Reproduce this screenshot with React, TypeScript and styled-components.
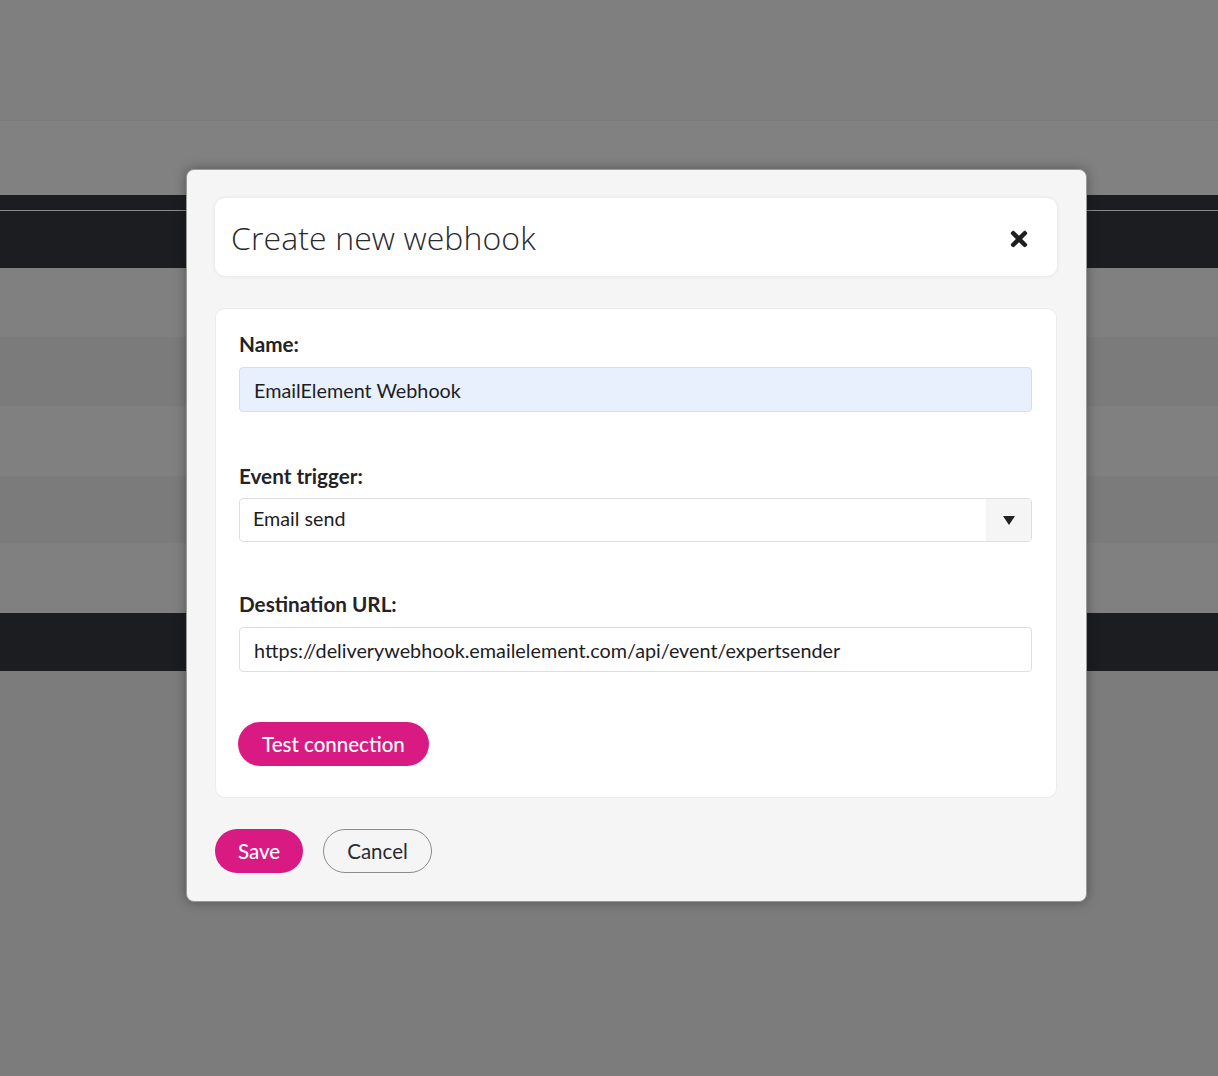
import React, { useState } from 'react'
import styled, { createGlobalStyle } from 'styled-components'
import { FaTimes } from 'react-icons/fa'

const GlobalStyle = createGlobalStyle`
  html, body {
    margin: 0;
    padding: 0;
    background: #7c7c7c;
  }
  body {
    font-family: Lato, 'Open Sans', Arial, sans-serif;
    color: #232323;
  }
  * {
    box-sizing: border-box;
  }
`

const Page = styled.div`
  position: relative;
  width: 1218px;
  height: 1076px;
  overflow: hidden;
  background: #7c7c7c;
`

const Band = styled.div<{ $h: number; $bg: string }>`
  height: ${(p) => p.$h}px;
  background: ${(p) => p.$bg};
`

const TopBand = styled.div`
  height: 121px;
  background: #7f7f7f;
  border-bottom: 1px solid #7a7a7a;
`

const DarkBar = styled.div<{ $h: number; $line?: boolean }>`
  height: ${(p) => p.$h}px;
  background: #1c1d21;
  padding-top: ${(p) => (p.$line ? '15px' : '0')};

  &::before {
    content: '';
    display: ${(p) => (p.$line ? 'block' : 'none')};
    height: 1px;
    background: #8a8a8a;
  }
`

const Modal = styled.div`
  position: absolute;
  left: 186px;
  top: 169px;
  width: 901px;
  padding: 28px 29px 28px 28px;
  background: #f5f5f5;
  border: 1px solid #9a9a9a;
  border-radius: 8px;
  box-shadow: 0 0 12px rgba(0, 0, 0, 0.35);
  display: flex;
  flex-direction: column;
`

const Header = styled.div`
  height: 78px;
  background: #fff;
  border-radius: 10px;
  box-shadow: 0 0 4px rgba(0, 0, 0, 0.08);
  display: flex;
  align-items: center;
  justify-content: space-between;
  padding: 0 26px 0 16px;
`

const Title = styled.h2`
  margin: 0;
  font-family: 'Open Sans', sans-serif;
  font-weight: 300;
  font-size: 32px;
  letter-spacing: 0.1px;
  color: #2a2a2e;
`

const CloseButton = styled.button`
  border: 0;
  background: none;
  padding: 0;
  margin-top: 3px;
  display: flex;
  color: #1f1f22;
  cursor: pointer;
`

const Card = styled.div`
  margin-top: 32px;
  background: #fff;
  border: 1px solid #ececec;
  border-radius: 10px;
  padding: 23px 24px 31px 23px;
  display: flex;
  flex-direction: column;
`

const Field = styled.div<{ $gap: number }>`
  display: flex;
  flex-direction: column;
  margin-bottom: ${(p) => p.$gap}px;
`

const Label = styled.label`
  font-weight: 700;
  font-size: 20.7px;
  line-height: 24px;
  margin-bottom: 11px;
  color: #232326;
`

const TextInput = styled.input<{ $filled?: boolean }>`
  height: 45px;
  width: 100%;
  border: 1px solid ${(p) => (p.$filled ? '#d8dde6' : '#dedede')};
  border-radius: 4px;
  background: ${(p) => (p.$filled ? '#e8f0fe' : '#fff')};
  padding: 0 14px;
  font-family: Lato, sans-serif;
  font-size: 19.8px;
  color: #1d1d1f;
  outline: none;
`

const Select = styled.div`
  height: 44px;
  display: flex;
  border: 1px solid #dedede;
  border-radius: 4px;
  overflow: hidden;
  margin-top: -1px;
`

const SelectValue = styled.div`
  flex: 1;
  display: flex;
  align-items: center;
  padding: 0 13px 3px;
  font-size: 19.7px;
  color: #1d1d1f;
`

const SelectArrow = styled.div`
  width: 45px;
  background: #f5f5f5;
  display: flex;
  align-items: center;
  justify-content: center;
`

const PinkButton = styled.button`
  height: 44px;
  padding: 0 23px;
  border: 0;
  border-radius: 22px;
  background: #d91a82;
  color: #fff;
  font-family: Lato, sans-serif;
  font-size: 20.5px;
  font-weight: 500;
  align-self: flex-start;
  cursor: pointer;
`

const TestButton = styled(PinkButton)`
  margin-left: -1px;
  padding: 0 24px;
`

const Footer = styled.div`
  margin-top: 31px;
  display: flex;
  gap: 20px;
`

const GhostButton = styled.button`
  height: 44px;
  padding: 0 23px;
  border: 1px solid #8c8c8c;
  border-radius: 22px;
  background: transparent;
  color: #2a2a2e;
  font-family: Lato, sans-serif;
  font-size: 20.5px;
  cursor: pointer;
`

export default function App() {
  const [name, setName] = useState('EmailElement Webhook')
  const [url, setUrl] = useState('https://deliverywebhook.emailelement.com/api/event/expertsender')

  return (
    <Page>
      <GlobalStyle />
      <TopBand />
      <Band $h={74} $bg="#818181" />
      <DarkBar $h={73} $line />
      <Band $h={69} $bg="#808080" />
      <Band $h={69} $bg="#7b7b7b" />
      <Band $h={70} $bg="#808080" />
      <Band $h={67} $bg="#7b7b7b" />
      <Band $h={70} $bg="#808080" />
      <DarkBar $h={58} />

      <Modal>
        <Header>
          <Title>Create new webhook</Title>
          <CloseButton aria-label="close">
            <FaTimes size={24} />
          </CloseButton>
        </Header>

        <Card>
          <Field $gap={52}>
            <Label>Name:</Label>
            <TextInput $filled value={name} onChange={(e) => setName(e.target.value)} />
          </Field>
          <Field $gap={50}>
            <Label>Event trigger:</Label>
            <Select>
              <SelectValue>Email send</SelectValue>
              <SelectArrow>
                <svg width="12" height="9" viewBox="0 0 12 9">
                  <path d="M0 0 H12 L6 9 Z" fill="#222" />
                </svg>
              </SelectArrow>
            </Select>
          </Field>
          <Field $gap={50}>
            <Label>Destination URL:</Label>
            <TextInput value={url} onChange={(e) => setUrl(e.target.value)} />
          </Field>
          <TestButton>Test connection</TestButton>
        </Card>

        <Footer>
          <PinkButton>Save</PinkButton>
          <GhostButton>Cancel</GhostButton>
        </Footer>
      </Modal>
    </Page>
  )
}
